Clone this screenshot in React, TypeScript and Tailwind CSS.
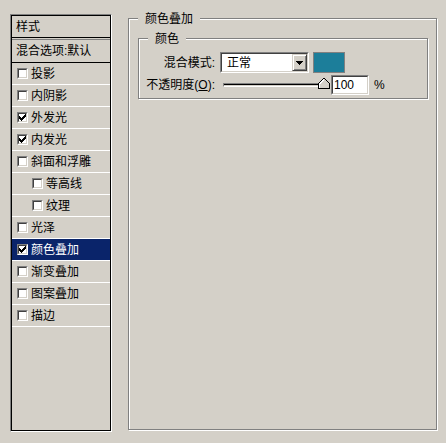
import React from "react"

const font = "font-['Liberation_Sans','Noto_Sans_CJK_SC',sans-serif]"

type Item = { label: string; checked?: boolean; indent?: boolean; selected?: boolean }

const items: Item[] = [
  { label: "投影" },
  { label: "内阴影" },
  { label: "外发光", checked: true },
  { label: "内发光", checked: true },
  { label: "斜面和浮雕" },
  { label: "等高线", indent: true },
  { label: "纹理", indent: true },
  { label: "光泽" },
  { label: "颜色叠加", checked: true, selected: true },
  { label: "渐变叠加" },
  { label: "图案叠加" },
  { label: "描边" },
]

function CheckBox({ checked }: { checked?: boolean }) {
  return (
    <div className="w-[11px] h-[11px] shrink-0 border border-t-[#808080] border-l-[#808080] border-b-white border-r-white">
      <div className="w-full h-full border border-t-[#404040] border-l-[#404040] border-b-[#d4d0c8] border-r-[#d4d0c8] bg-white flex items-center justify-center">
        {checked && (
          <svg width="7" height="7" viewBox="0 0 7 7" shapeRendering="crispEdges">
            <rect x="0" y="2" width="1" height="3" fill="#000" />
            <rect x="1" y="3" width="1" height="3" fill="#000" />
            <rect x="2" y="4" width="1" height="3" fill="#000" />
            <rect x="3" y="3" width="1" height="3" fill="#000" />
            <rect x="4" y="2" width="1" height="3" fill="#000" />
            <rect x="5" y="1" width="1" height="3" fill="#000" />
            <rect x="6" y="0" width="1" height="3" fill="#000" />
          </svg>
        )}
      </div>
    </div>
  )
}

function Sunken({ className, children }: { className?: string; children?: React.ReactNode }) {
  return (
    <div className={"border border-t-[#808080] border-l-[#808080] border-b-white border-r-white " + (className ?? "")}>
      <div className="w-full h-full border border-t-[#404040] border-l-[#404040] border-b-[#d4d0c8] border-r-[#d4d0c8] bg-white flex items-center">
        {children}
      </div>
    </div>
  )
}

export default function App() {
  return (
    <div className={`w-[446px] h-[443px] bg-[#d4d0c8] flex items-start pl-[10px] pt-[14px] text-[12px] leading-none text-black ${font}`}>
      {/* styles list */}
      <div className="w-[102px] h-[418px] border border-t-[#808080] border-l-[#808080] border-b-white border-r-white">
        <div className="w-full h-full border border-black flex flex-col">
          <div className="h-[21px] flex items-center pl-[4px]">样式</div>
          <div className="h-px bg-black" />
          <div className="h-px bg-[#d4d0c8]" />
          <div className="h-px bg-[#808080]" />
          <div className="h-[22px] flex items-center pl-[4px]">混合选项:默认</div>
          <div className="h-px bg-black" />
          {items.map((it) => (
            <div
              key={it.label}
              className={
                "h-[22px] flex items-center gap-[3px] border-b border-white " +
                (it.indent ? "pl-[20px] " : "pl-[5px] ") +
                (it.selected ? "bg-[#0a246a] text-white" : "")
              }
            >
              <CheckBox checked={it.checked} />
              <span>{it.label}</span>
            </div>
          ))}
        </div>
      </div>

      {/* color overlay group */}
      <div className="relative ml-[16px] mt-[4px] w-[309px] h-[412px] border border-[#808080] shadow-[1px_1px_0_#fff,inset_1px_1px_0_#fff] pt-[19px] pl-[9px]">
        <span className="absolute left-[9px] -top-[6px] px-[7px] bg-[#d4d0c8]">颜色叠加</span>

        <div className="relative w-[290px] h-[61px] border border-[#808080] shadow-[1px_1px_0_#fff,inset_1px_1px_0_#fff] pt-[13px]">
          <span className="absolute left-[9px] -top-[6px] px-[7px] bg-[#d4d0c8]">颜色</span>

          <div className="flex items-center h-[21px]">
            <span className="w-[77px] text-right pr-[1px]">混合模式:</span>
            <Sunken className="ml-[4px] w-[89px] h-[21px]">
              <span className="pl-[5px] flex-1">正常</span>
              <div className="w-[15px] h-full border border-t-[#d4d0c8] border-l-[#d4d0c8] border-b-[#404040] border-r-[#404040] bg-[#d4d0c8] flex items-center justify-center shadow-[inset_1px_1px_0_#fff,inset_-1px_-1px_0_#808080]">
                <svg width="7" height="4" viewBox="0 0 7 4" shapeRendering="crispEdges">
                  <path d="M0 0H7V1H6V2H5V3H4V4H3V3H2V2H1V1H0Z" fill="#000" />
                </svg>
              </div>
            </Sunken>
            <div className="ml-[4px] w-[32px] h-[21px] border border-[#808080] bg-[#1c7e9a]" />
          </div>

          <div className="flex items-center h-[20px] mt-[2px]">
            <span className="w-[77px] text-right pr-[1px]">
              不透明度(<span className="underline">O</span>):
            </span>
            <div className="relative ml-[7px] w-[103px] h-[20px] flex items-center">
              <div className="w-full h-[4px] border border-t-[#808080] border-l-[#808080] border-b-white border-r-white">
                <div className="w-full h-full border-t border-black bg-[#d4d0c8]" />
              </div>
              <svg className="absolute left-[95px] top-[3px]" width="12" height="11" viewBox="0 0 12 11" shapeRendering="crispEdges">
                <path d="M0.5 10.5V5.5L5.5 0.5H6.5L11.5 5.5V10.5Z" fill="#d4d0c8" stroke="#000" />
                <path d="M1.5 9.5V5.9L5.9 1.5" fill="none" stroke="#fff" />
              </svg>
            </div>
            <Sunken className="ml-[5px] w-[38px] h-[20px]">
              <span className="pl-[1px]">100</span>
            </Sunken>
            <span className="ml-[5px]">%</span>
          </div>
        </div>
      </div>
    </div>
  )
}
